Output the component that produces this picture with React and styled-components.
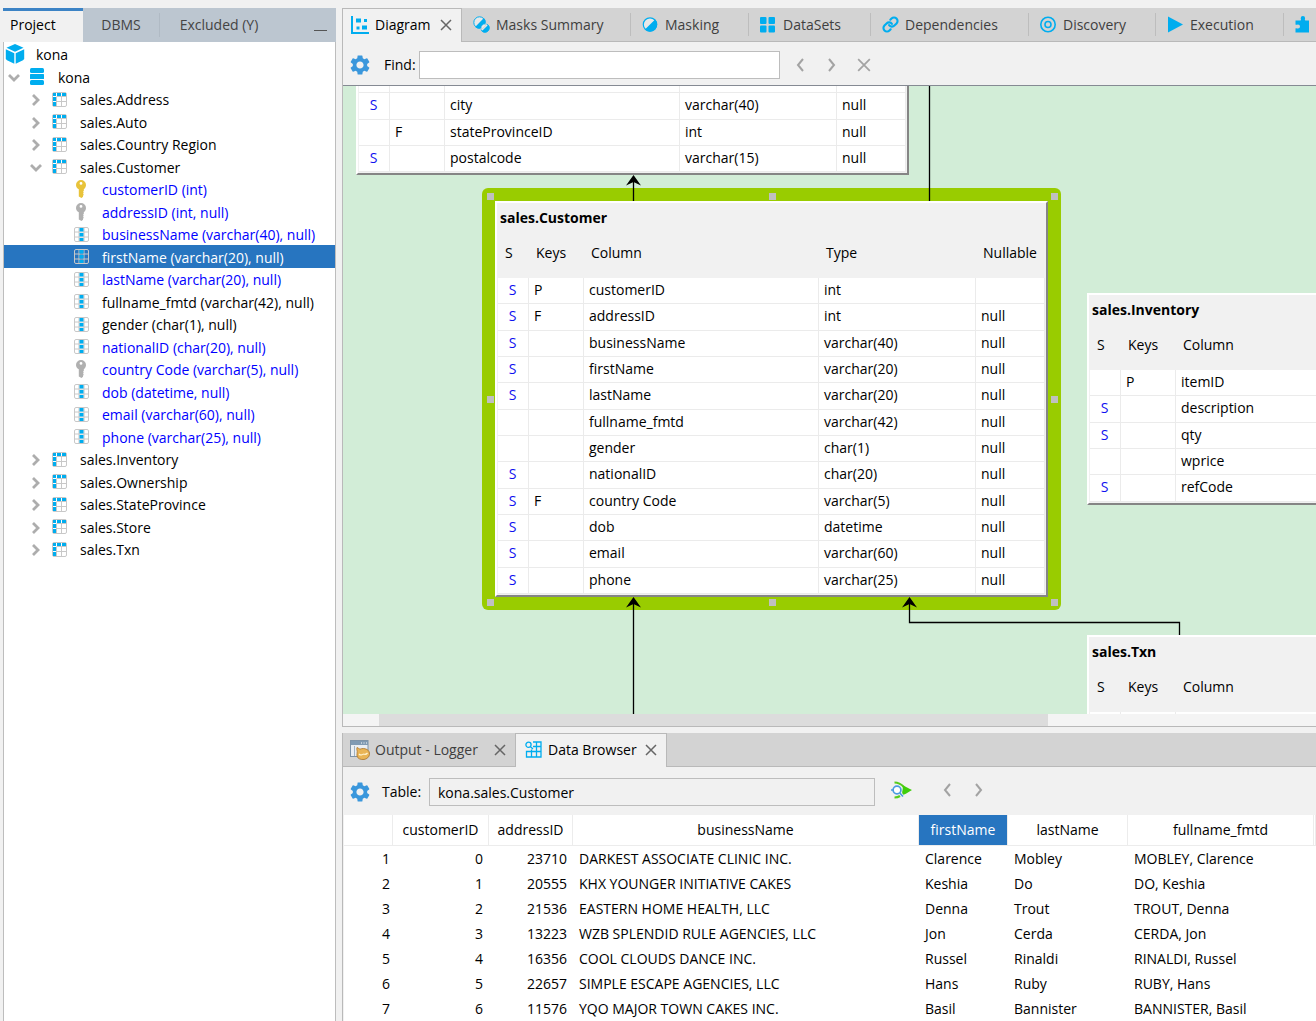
import React from "react";
import styled, { createGlobalStyle, css } from "styled-components";
import { Link } from "lucide-react";
import { MdSettings } from "react-icons/md";

const GlobalStyle = createGlobalStyle`
  * {
    box-sizing: border-box;
  }

  body {
    margin: 0;
    background-color: #f1f1f1;
    color: #000;
    font-family: "Open Sans", "Noto Sans", sans-serif;
    font-size: 14px;
    line-height: 20px;
  }

  button,
  input {
    font: inherit;
    color: inherit;
  }

  svg {
    display: block;
    flex: none;
  }
`;

const Page = styled.div`
  display: flex;
  gap: 6px;
  height: 100vh;
  padding: 8px 0 0 3px;
  overflow: hidden;
`;

/* ---------- sidebar ---------- */

const Sidebar = styled.aside`
  flex: 0 0 333px;
  display: flex;
  flex-direction: column;
`;

const SideTabs = styled.div`
  display: flex;
  height: 34px;
  background-color: #bcc6d0;
`;

const SideTab = styled.button`
  width: ${(props) => props.$width}px;
  padding: 0 0 3px;
  border: 0;
  border-top: 3px solid ${(props) => (props.$active ? "#3c83c5" : "transparent")};
  background-color: ${(props) => (props.$active ? "#f1f1f1" : "transparent")};
  color: ${(props) => (props.$active ? "#000" : "#444")};
  text-align: center;
  white-space: nowrap;

  ${(props) =>
    props.$active &&
    css`
      padding-left: 7px;
      text-align: left;
    `}
`;

const SideDivider = styled.span`
  width: 1px;
  margin: 5px 0;
  background-color: #b0bac4;
`;

const Minimize = styled.button`
  display: flex;
  align-items: flex-end;
  margin-left: auto;
  padding: 0 9px 11px;
  border: 0;
  background: none;

  &::after {
    content: "";
    width: 13px;
    height: 1px;
    background-color: #555;
  }
`;

const Tree = styled.ul`
  flex: 1;
  margin: 0;
  padding: 1px 0 0;
  border: 1px solid #bdbdbd;
  border-width: 0 1px;
  background-color: #fff;
  list-style: none;
`;

const TreeRow = styled.li`
  display: flex;
  align-items: center;
  height: 22px;
  padding-top: 2px;
  padding-left: ${(props) => props.$indent * 22}px;
  color: ${(props) => (props.$selected ? "#fff" : props.$blue ? "#0000ff" : "#000")};
  background-color: ${(props) => (props.$selected ? "#2775c0" : "transparent")};
  white-space: nowrap;

  &:nth-child(even) {
    height: 23px;
  }
`;

const Twisty = styled.button`
  display: flex;
  justify-content: center;
  width: 22px;
  padding: 0 2px 0 0;
  border: 0;
  background: none;
  color: #adadad;
`;

const TreeIcon = styled.span`
  display: flex;
  justify-content: center;
  width: 22px;
  margin-right: 10px;
  padding-bottom: 2px;
`;

/* ---------- main area ---------- */

const Main = styled.main`
  flex: 1;
  min-width: 0;
  display: flex;
  flex-direction: column;
  gap: 6px;
`;

const Panel = styled.section`
  display: flex;
  flex-direction: column;
  min-height: 0;
  border-left: 1px solid #b9b9b9;

  ${(props) =>
    props.$grow &&
    css`
      flex: 1;
      border-bottom: 1px solid #b9b9b9;
    `}
`;

const TabBar = styled.div`
  display: flex;
  height: 34px;
  background-color: #d3d3d3;
  overflow: hidden;
`;

const TabItem = styled.div`
  flex: none;
  display: flex;
  align-items: center;
  justify-content: space-between;
  width: ${(props) => props.$width}px;
  padding: 0 9px 0 ${(props) => props.$inset || 11}px;
  border: 0 solid #b9b9b9;
  border-bottom-width: 1px;
  color: #3f3f3f;

  ${(props) =>
    props.$active &&
    css`
      padding-bottom: 2px;
      border-width: 1px 1px 0 ${props.$first ? "0" : "1px"};
      background-color: #f1f1f1;
      color: #000;
    `}
`;

const TabRest = styled.div`
  flex: 1;
  border-bottom: 1px solid #b9b9b9;
`;

const TabLabel = styled.button`
  display: flex;
  align-items: center;
  gap: ${(props) => props.$gap || 6}px;
  padding: 0;
  border: 0;
  background: none;
  white-space: nowrap;
`;

const TabDivider = styled.span`
  flex: none;
  width: 1px;
  border-bottom: 1px solid #b9b9b9;
  background: linear-gradient(#bdbdbd, #bdbdbd) center / 1px 23px no-repeat;
`;

const IconButton = styled.button`
  display: flex;
  padding: 0;
  border: 0;
  background: none;
  color: ${(props) => props.$color || "#a3a3a3"};
`;

const Toolbar = styled.div`
  display: flex;
  align-items: center;
  height: ${(props) => props.$height}px;
  padding: 2px 5px 0;
`;

const FieldLabel = styled.label`
  width: ${(props) => props.$width}px;
  padding-left: ${(props) => props.$pad}px;
`;

const Field = styled.input`
  flex: 0 1 ${(props) => props.$width}px;
  min-width: 0;
  height: 28px;
  padding: 0 8px;
  border: 1px solid #bdbdbd;
  border-radius: 0;
  background-color: ${(props) => (props.readOnly ? "#f1f1f1" : "#fff")};
  outline: 0;
`;

const ToolGroup = styled.div`
  display: flex;
  align-items: center;
  gap: ${(props) => props.$gap}px;
  margin-left: ${(props) => props.$space}px;
  padding-bottom: ${(props) => props.$raise || 0}px;
`;

/* ---------- diagram ---------- */

const Canvas = styled.div`
  position: relative;
  isolation: isolate;
  flex: 1;
  min-height: 0;
  border-top: 1px solid #858a93;
  background-color: #d2edd7;
  overflow: hidden;
`;

const Wires = styled.svg`
  position: absolute;
  inset: 0;
  width: 100%;
  height: 100%;
  pointer-events: none;
`;

const Entity = styled.div`
  position: absolute;
  left: ${(props) => props.$x}px;
  top: ${(props) => props.$y}px;
  padding: 1px;
  border: 2px solid #fff;
  border-right-color: #858585;
  border-bottom-color: #858585;
  background-color: #f1f1f1;

  ${(props) =>
    props.$wide
      ? css`
          right: -20px;
        `
      : css`
          width: 553px;
        `}

  ${(props) =>
    props.$selected &&
    css`
      &::before {
        content: "";
        position: absolute;
        z-index: -1;
        inset: -15px;
        border-radius: 6px;
        background-color: #99cc00;
      }
    `}
`;

const EntityTable = styled.table`
  width: 100%;
  border-spacing: 0;
  table-layout: fixed;
  background-color: #f1f1f1;
  white-space: nowrap;

  caption {
    height: 28px;
    padding: 4px 2px;
    background-color: #f1f1f1;
    font-weight: 700;
    text-align: left;
  }

  th {
    height: 46px;
    padding: 0 0 4px 7px;
    font-weight: 400;
    text-align: left;
  }

  td {
    height: 26px;
    padding: 0 0 2px 5px;
    border: 0 solid #ebebeb;
    border-width: 0 1px 1px 0;
    background-color: #fff;
  }

  tr:nth-child(3n + 2) td {
    height: 27px;
  }

  td:first-child {
    padding: 0 1px 2px 0;
    color: #1010f0;
    text-align: center;
  }
`;

const Handle = styled.span`
  position: absolute;
  left: ${(props) => props.$left};
  top: ${(props) => props.$top};
  width: 7px;
  height: 7px;
  background-color: #c0c0c0;
`;

const ScrollTrack = styled.div`
  flex: none;
  height: 12px;
  padding: 0 268px 0 36px;
  background-color: #f4f4f4;
`;

const ScrollThumb = styled.div`
  height: 100%;
  background-color: #dcdcdc;
`;

/* ---------- data browser ---------- */

const DataTable = styled.table`
  width: 100%;
  border-left: 1px solid #f1f1f1;
  border-spacing: 0;
  table-layout: fixed;
  background-color: #fff;
  white-space: nowrap;

  th {
    height: 31px;
    padding: 0 0 1px;
    border: 0 solid #ececec;
    border-width: 0 1px 1px 0;
    font-weight: 400;
    text-align: center;
  }

  td {
    height: 25px;
    padding: 0 0 0 6px;
    overflow: hidden;
  }

  td:nth-child(-n + 3) {
    padding: 0 6px 0 0;
    text-align: right;
  }

  td:first-child {
    padding-right: 3px;
  }
`;

const HeadCell = styled.th`
  ${(props) =>
    props.$selected &&
    css`
      background-color: #2775c0;
      color: #fff;
    `}
`;

/* ---------- icons ---------- */

const SKY = "#00adef";

const Chevron = ({ dir, size = 14, width = 2 }) => {
  const paths = {
    right: "M4 2l5 5-5 5",
    left: "M10 1L5 7l5 6",
    next: "M4 1l5 6-5 6",
    down: "M2 4l5 5 5-5",
  };
  return (
    <svg width={size} height={size} viewBox="0 0 14 14" fill="none" stroke="currentColor" strokeWidth={width}>
      <path d={paths[dir]} />
    </svg>
  );
};

const Cross = ({ size = 12 }) => (
  <svg width={size} height={size} viewBox="0 0 12 12" fill="none" stroke="currentColor" strokeWidth="1.5">
    <path d="M1 1l10 10M11 1L1 11" />
  </svg>
);

const CubeIcon = () => (
  <svg width="20" height="20" viewBox="0 0 20 20" fill={SKY}>
    <path d="M10 0l8.5 3.8L10 7.8 1.5 3.8zM.8 5.2l8.5 4v10.5L2 16.2.8 15zM19.2 5.2l-8.5 4v10.5l7.3-3.5 1.2-1.2z" />
  </svg>
);

const DatabaseIcon = () => (
  <svg width="14" height="18" viewBox="0 0 14 18" fill={SKY}>
    <rect width="14" height="5" y="0" rx="1.5" />
    <rect width="14" height="5" y="6" rx=".5" />
    <rect width="14" height="5" y="12" rx="1.5" />
  </svg>
);

const TableIcon = () => (
  <svg width="15" height="15" viewBox="0 0 15 15">
    <rect x=".5" y=".5" width="14" height="14" rx="1.5" fill="#fff" stroke="#c8c8c8" />
    <path d="M4.500 4.500v9.500M9.500 5v9.500M5 9.500h9.500M5 4.500h9.500" stroke="#c8c8c8" fill="none" />
    <path d="M1 1h3v3H1zM5 1h4v3H5zM10 1h4v3h-4zM1 5h3v4H1zM1 10h3v4H1z" fill={SKY} />
  </svg>
);

const ColumnIcon = ({ on }) => (
  <svg width="15" height="15" viewBox="0 0 15 15">
    <rect x=".5" y=".5" width="14" height="14" rx="1.5" fill={on ? "#2775c0" : "#fff"} stroke="#c8c8c8" />
    <path d="M5 1v13M10 1v13M1 5h13M1 10h13" stroke="#c8c8c8" fill="none" />
    <path d="M5.500 1h4v3.500h-4zM5.500 6h4v3.500h-4zM5.500 11h4v3h-4z" fill={SKY} />
  </svg>
);

const KeyIcon = ({ color }) => (
  <svg width="10" height="18" viewBox="0 0 10 18" fill={color}>
    <path
      fillRule="evenodd"
      d="M5 0a5 5 0 0 1 5 5c0 2-1 3.300-2.200 4.200V11l-.8.800.8 1-.8 1 .8 1-.8 1v1L5.500 18l-2.700-1.500V9.200C1 8.300 0 7 0 5a5 5 0 0 1 5-5zm0 2a1.400 1.400 0 1 0 0 2.800A1.400 1.400 0 0 0 5 2z"
    />
  </svg>
);

const DiagramIcon = () => (
  <svg width="18" height="18" viewBox="0 0 18 18" fill={SKY}>
    <path d="M0 0h2v16h16v2H0zM5 2.500h5v4H5zM13 3h3v3h-3zM5.500 10.500h3v3h-3zM11 9.500h5v4h-5z" />
  </svg>
);

const MasksIcon = () => (
  <svg width="17" height="17" viewBox="0 0 17 17">
    <circle cx="6.500" cy="6.500" r="5.700" fill="#e8e8e8" stroke={SKY} />
    <path d="M10.900 2.100A6.200 6.200 0 0 1 2.100 10.900z" fill={SKY} />
    <circle cx="12" cy="12" r="4.200" fill="#e8e8e8" stroke={SKY} />
    <path d="M15.300 8.700A4.700 4.700 0 0 1 8.700 15.300z" fill={SKY} />
    <path d="M13.300 6.500a7 7 0 0 1-6.800 6.800" fill="none" stroke="#d3d3d3" />
  </svg>
);

const MaskIcon = () => (
  <svg width="17" height="17" viewBox="0 0 17 17">
    <circle cx="8" cy="8.500" r="6.700" fill="#e8e8e8" stroke={SKY} strokeWidth="1.200" />
    <path d="M13.100 3.400A7.200 7.200 0 0 1 2.900 13.600z" fill={SKY} />
  </svg>
);

const DataSetsIcon = () => (
  <svg width="17" height="17" viewBox="0 0 17 17" fill={SKY}>
    <rect x="0" y="1" width="6.500" height="7" rx="1" />
    <rect x="8.500" y="1" width="6.500" height="7" rx="1" />
    <rect x="0" y="9.500" width="6.500" height="7" rx="1" />
    <rect x="8.500" y="9.500" width="6.500" height="7" rx="1" />
  </svg>
);

const TargetIcon = () => (
  <svg width="17" height="17" viewBox="0 0 17 17" fill="none" stroke={SKY} strokeWidth="1.600">
    <circle cx="8" cy="8.500" r="7.200" />
    <circle cx="8" cy="8.500" r="3" />
  </svg>
);

const PlayIcon = () => (
  <svg width="17" height="17" viewBox="0 0 17 17" fill={SKY}>
    <path d="M1 .500l15 8-15 8z" />
  </svg>
);

const PuzzleIcon = () => (
  <svg width="17" height="17" viewBox="0 0 17 17" fill={SKY}>
    <path d="M5.500 4.500c1-.5.200-1 .2-2.200a2.200 2.200 0 0 1 4.400 0c0 1.200-.8 1.700.3 2.200H14v12H.500v-4c.5-.8 1.500 0 2.500 0a2 2 0 0 0 0-4c-1 0-2 .8-2.500 0v-4z" />
  </svg>
);

const LoggerIcon = () => (
  <svg width="20" height="20" viewBox="0 0 20 20">
    <rect x=".5" y=".5" width="17.500" height="16" fill="#e9eef3" stroke="#7d93a8" />
    <path d="M1 1h17v4H1z" fill="#7f9ab3" />
    <path d="M11 3h1M13.500 3h1M16 3h1" stroke="#fff" />
    <path d="M4.500 6v10" stroke="#9fb2c4" />
    <path
      d="M7 7.500c1 .2 2 1.500 3 1.700 2-1 4.500-1 7 .3 2 1.200 2.800 3 2.500 5-.4 2.500-2.500 4.500-5.500 5-3.500.4-6.500-1-7-3.500-.4-1.700.4-3 .2-4.500S6.500 9 7 7.500z"
      fill="#e9b455"
      stroke="#a9742a"
      strokeWidth=".8"
    />
    <path d="M9 14c1.500 1.800 3.500.8 4.500-.2M13.500 14c1.500.7 3 .2 4-1" stroke="#fff3d0" strokeWidth="1.200" fill="none" />
  </svg>
);

const BrowserIcon = () => (
  <svg width="17" height="17" viewBox="0 0 17 17" fill="none" stroke={SKY} strokeWidth="1.300">
    <circle cx="3.500" cy="3.800" r="2.600" />
    <path d="M5.500 5.700L8 8M8 1h8v15H1.500V10.500H16M6.500 8.500V16M11.500 1v15M8 5.500h8" />
  </svg>
);

const RunIcon = () => (
  <svg width="21" height="18" viewBox="0 0 21 18">
    <path d="M3.500 1.500c4 0 6.500 1.500 9.500 4.500M3.500 16.500c2 0 4-.5 5.500-1.500" stroke="#56cc1c" strokeWidth="2.200" fill="none" />
    <path d="M11.500 4.500c3 .8 6 3 9.500 4.500-3 1.500-5 3.500-8.500 4.800-1-.8-1.500-1.800-1.300-3 .6-2 .8-4 .3-6.300z" fill="#3fce0a" />
    <circle cx="6" cy="9" r="3.900" fill="#fff" stroke="#4a9be0" strokeWidth="1.700" />
    <path d="M0 9h2.500M8.800 12l3.200 3.500" stroke="#4a9be0" strokeWidth="1.700" />
  </svg>
);

/* ---------- data ---------- */

const tree = [
  { depth: 0, label: "kona", icon: "cube" },
  { depth: 1, label: "kona", icon: "db", open: true },
  { depth: 2, label: "sales.Address", icon: "table" },
  { depth: 2, label: "sales.Auto", icon: "table" },
  { depth: 2, label: "sales.Country Region", icon: "table" },
  { depth: 2, label: "sales.Customer", icon: "table", open: true },
  { depth: 3, label: "customerID (int)", icon: "primary", blue: true },
  { depth: 3, label: "addressID (int, null)", icon: "foreign", blue: true },
  { depth: 3, label: "businessName (varchar(40), null)", icon: "column", blue: true },
  { depth: 3, label: "firstName (varchar(20), null)", icon: "column", selected: true },
  { depth: 3, label: "lastName (varchar(20), null)", icon: "column", blue: true },
  { depth: 3, label: "fullname_fmtd (varchar(42), null)", icon: "column" },
  { depth: 3, label: "gender (char(1), null)", icon: "column" },
  { depth: 3, label: "nationalID (char(20), null)", icon: "column", blue: true },
  { depth: 3, label: "country Code (varchar(5), null)", icon: "foreign", blue: true },
  { depth: 3, label: "dob (datetime, null)", icon: "column", blue: true },
  { depth: 3, label: "email (varchar(60), null)", icon: "column", blue: true },
  { depth: 3, label: "phone (varchar(25), null)", icon: "column", blue: true },
  { depth: 2, label: "sales.Inventory", icon: "table" },
  { depth: 2, label: "sales.Ownership", icon: "table" },
  { depth: 2, label: "sales.StateProvince", icon: "table" },
  { depth: 2, label: "sales.Store", icon: "table" },
  { depth: 2, label: "sales.Txn", icon: "table" },
];

const tabs = [
  { label: "Masks Summary", icon: <MasksIcon />, width: 168 },
  { label: "Masking", icon: <MaskIcon />, width: 117 },
  { label: "DataSets", icon: <DataSetsIcon />, width: 121 },
  { label: "Dependencies", icon: <Link size={17} color={SKY} strokeWidth={3} />, width: 157 },
  { label: "Discovery", icon: <TargetIcon />, width: 126 },
  { label: "Execution", icon: <PlayIcon />, width: 127 },
];

const addressRows = [
  ["", "", "", "", ""],
  ["S", "", "city", "varchar(40)", "null"],
  ["", "F", "stateProvinceID", "int", "null"],
  ["S", "", "postalcode", "varchar(15)", "null"],
];

const customerRows = [
  ["S", "P", "customerID", "int", ""],
  ["S", "F", "addressID", "int", "null"],
  ["S", "", "businessName", "varchar(40)", "null"],
  ["S", "", "firstName", "varchar(20)", "null"],
  ["S", "", "lastName", "varchar(20)", "null"],
  ["", "", "fullname_fmtd", "varchar(42)", "null"],
  ["", "", "gender", "char(1)", "null"],
  ["S", "", "nationalID", "char(20)", "null"],
  ["S", "F", "country Code", "varchar(5)", "null"],
  ["S", "", "dob", "datetime", "null"],
  ["S", "", "email", "varchar(60)", "null"],
  ["S", "", "phone", "varchar(25)", "null"],
];

const inventoryRows = [
  ["", "P", "itemID"],
  ["S", "", "description"],
  ["S", "", "qty"],
  ["", "", "wprice"],
  ["S", "", "refCode"],
];

const records = [
  [1, 0, 23710, "DARKEST ASSOCIATE CLINIC INC.", "Clarence", "Mobley", "MOBLEY, Clarence"],
  [2, 1, 20555, "KHX YOUNGER INITIATIVE CAKES", "Keshia", "Do", "DO, Keshia"],
  [3, 2, 21536, "EASTERN HOME HEALTH, LLC", "Denna", "Trout", "TROUT, Denna"],
  [4, 3, 13223, "WZB SPLENDID RULE AGENCIES, LLC", "Jon", "Cerda", "CERDA, Jon"],
  [5, 4, 16356, "COOL CLOUDS DANCE INC.", "Russel", "Rinaldi", "RINALDI, Russel"],
  [6, 5, 22657, "SIMPLE ESCAPE AGENCIES, LLC", "Hans", "Ruby", "RUBY, Hans"],
  [7, 6, 11576, "YQO MAJOR TOWN CAKES INC.", "Basil", "Bannister", "BANNISTER, Basil"],
];

const handles = [
  ["-10px", "-10px"],
  ["calc(50% - 3px)", "-10px"],
  ["calc(100% + 5px)", "-10px"],
  ["-10px", "calc(50% - 3px)"],
  ["calc(100% + 5px)", "calc(50% - 3px)"],
  ["-10px", "calc(100% + 4px)"],
  ["calc(50% - 3px)", "calc(100% + 4px)"],
  ["calc(100% + 5px)", "calc(100% + 4px)"],
];

/* ---------- components ---------- */

const NodeIcon = ({ kind, selected }) => {
  if (kind === "cube") return <CubeIcon />;
  if (kind === "db") return <DatabaseIcon />;
  if (kind === "table") return <TableIcon />;
  if (kind === "primary") return <KeyIcon color="#e8c33a" />;
  if (kind === "foreign") return <KeyIcon color="#b0b0b0" />;
  return <ColumnIcon on={selected} />;
};

const ProjectTree = () => (
  <Tree role="tree">
    {tree.map((node, i) => {
      const expandable = node.depth === 1 || node.depth === 2;
      return (
        <TreeRow
          key={i}
          role="treeitem"
          aria-level={node.depth + 1}
          aria-selected={!!node.selected}
          $indent={expandable ? node.depth - 1 : node.depth}
          $blue={node.blue}
          $selected={node.selected}
        >
          {expandable && (
            <Twisty aria-label={node.open ? "Collapse" : "Expand"}>
              <Chevron dir={node.open ? "down" : "right"} width={2.8} />
            </Twisty>
          )}
          <TreeIcon>
            <NodeIcon kind={node.icon} selected={node.selected} />
          </TreeIcon>
          {node.label}
        </TreeRow>
      );
    })}
  </Tree>
);

const TableNode = ({ x, y, title, columns, rows, wide, selected }) => (
  <Entity $x={x} $y={y} $wide={wide} $selected={selected}>
    <EntityTable>
      {title && <caption>{title}</caption>}
      <colgroup>
        <col width="31" />
        <col width="55" />
        <col />
        {!wide && <col width="157" />}
        {!wide && <col width="69" />}
      </colgroup>
      {columns && (
        <thead>
          <tr>
            {columns.map((name) => (
              <th key={name}>{name}</th>
            ))}
          </tr>
        </thead>
      )}
      <tbody>
        {rows.map((row, i) => (
          <tr key={i}>
            {row.map((cell, j) => (
              <td key={j}>{cell}</td>
            ))}
          </tr>
        ))}
      </tbody>
    </EntityTable>
    {selected && handles.map(([left, top], i) => <Handle key={i} $left={left} $top={top} />)}
  </Entity>
);

const Diagram = () => (
  <Canvas>
    <TableNode x={13} y={-22} rows={addressRows} />
    <TableNode
      x={152}
      y={115}
      title="sales.Customer"
      columns={["S", "Keys", "Column", "Type", "Nullable"]}
      rows={customerRows}
      selected
    />
    <TableNode x={744} y={207} title="sales.Inventory" columns={["S", "Keys", "Column"]} rows={inventoryRows} wide />
    <TableNode x={744} y={549} title="sales.Txn" columns={["S", "Keys", "Column"]} rows={[["", "", ""]]} wide />
    <Wires>
      <g fill="none" stroke="#000" strokeWidth="1.300">
        <path d="M290.500 94V115M586.500 0V115M290.500 516V2000M566.500 516V536.500H836.500V549" />
      </g>
      <path d="M290.500 89l7.500 10.500-7.500-3.500-7.500 3.500zM290.500 511l7.500 10.500-7.500-3.500-7.500 3.500zM566.500 511l7.500 10.500-7.500-3.500-7.500 3.500z" />
    </Wires>
  </Canvas>
);

const DataGrid = () => (
  <DataTable>
    <colgroup>
      <col width="49" />
      <col width="96" />
      <col width="84" />
      <col />
      <col width="89" />
      <col width="120" />
      <col width="186" />
      <col width="2" />
    </colgroup>
    <thead>
      <tr>
        {["", "customerID", "addressID", "businessName", "firstName", "lastName", "fullname_fmtd"].map((name) => (
          <HeadCell key={name} $selected={name === "firstName"}>
            {name}
          </HeadCell>
        ))}
        <HeadCell />
      </tr>
    </thead>
    <tbody>
      {records.map((record) => (
        <tr key={record[0]}>
          {record.map((value, i) => (
            <td key={i}>{value}</td>
          ))}
        </tr>
      ))}
    </tbody>
  </DataTable>
);

const App = () => {
  return (
    <>
      <GlobalStyle />
      <Page>
        <Sidebar>
          <SideTabs>
            <SideTab $active $width={80}>
              Project
            </SideTab>
            <SideTab $width={76}>DBMS</SideTab>
            <SideDivider />
            <SideTab $width={118}>Excluded (Y)</SideTab>
            <Minimize aria-label="Minimize" />
          </SideTabs>
          <ProjectTree />
        </Sidebar>

        <Main>
          <Panel $grow>
            <TabBar>
              <TabItem $active $first $width={119} $inset={8}>
                <TabLabel>
                  <DiagramIcon />
                  Diagram
                </TabLabel>
                <IconButton $color="#666" aria-label="Close Diagram">
                  <Cross />
                </IconButton>
              </TabItem>
              {tabs.map((tab) => (
                <React.Fragment key={tab.label}>
                  <TabItem $width={tab.width}>
                    <TabLabel>
                      {tab.icon}
                      {tab.label}
                    </TabLabel>
                  </TabItem>
                  <TabDivider />
                </React.Fragment>
              ))}
              <TabItem $width={33}>
                <TabLabel aria-label="Plugins">
                  <PuzzleIcon />
                </TabLabel>
              </TabItem>
              <TabRest />
            </TabBar>
            <Toolbar $height={43}>
              <IconButton $color="#3a97dc" aria-label="Diagram settings">
                <MdSettings size={24} />
              </IconButton>
              <FieldLabel htmlFor="find" $width={47} $pad={12}>
                Find:
              </FieldLabel>
              <Field id="find" type="text" $width={361} />
              <ToolGroup $gap={18} $space={13}>
                <IconButton aria-label="Previous match">
                  <Chevron dir="left" />
                </IconButton>
                <IconButton aria-label="Next match">
                  <Chevron dir="next" />
                </IconButton>
                <IconButton aria-label="Clear">
                  <Cross size={14} />
                </IconButton>
              </ToolGroup>
            </Toolbar>
            <Diagram />
            <ScrollTrack>
              <ScrollThumb />
            </ScrollTrack>
          </Panel>

          <Panel>
            <TabBar>
              <TabItem $width={172} $inset={7}>
                <TabLabel $gap={5}>
                  <LoggerIcon />
                  Output - Logger
                </TabLabel>
                <IconButton $color="#666" aria-label="Close Output">
                  <Cross />
                </IconButton>
              </TabItem>
              <TabItem $active $width={152} $inset={9}>
                <TabLabel>
                  <BrowserIcon />
                  Data Browser
                </TabLabel>
                <IconButton $color="#666" aria-label="Close Data Browser">
                  <Cross />
                </IconButton>
              </TabItem>
              <TabRest />
            </TabBar>
            <Toolbar $height={48}>
              <IconButton $color="#3a97dc" aria-label="Browser settings">
                <MdSettings size={24} />
              </IconButton>
              <FieldLabel htmlFor="table" $width={57} $pad={10}>
                Table:
              </FieldLabel>
              <Field id="table" type="text" defaultValue="kona.sales.Customer" readOnly $width={446} />
              <ToolGroup $gap={28} $space={16} $raise={4}>
                <IconButton aria-label="Run query">
                  <RunIcon />
                </IconButton>
                <ToolGroup $gap={18} $space={0}>
                  <IconButton aria-label="Previous page">
                    <Chevron dir="left" />
                  </IconButton>
                  <IconButton aria-label="Next page">
                    <Chevron dir="next" />
                  </IconButton>
                </ToolGroup>
              </ToolGroup>
            </Toolbar>
            <DataGrid />
          </Panel>
        </Main>
      </Page>
    </>
  );
};

export default App;
